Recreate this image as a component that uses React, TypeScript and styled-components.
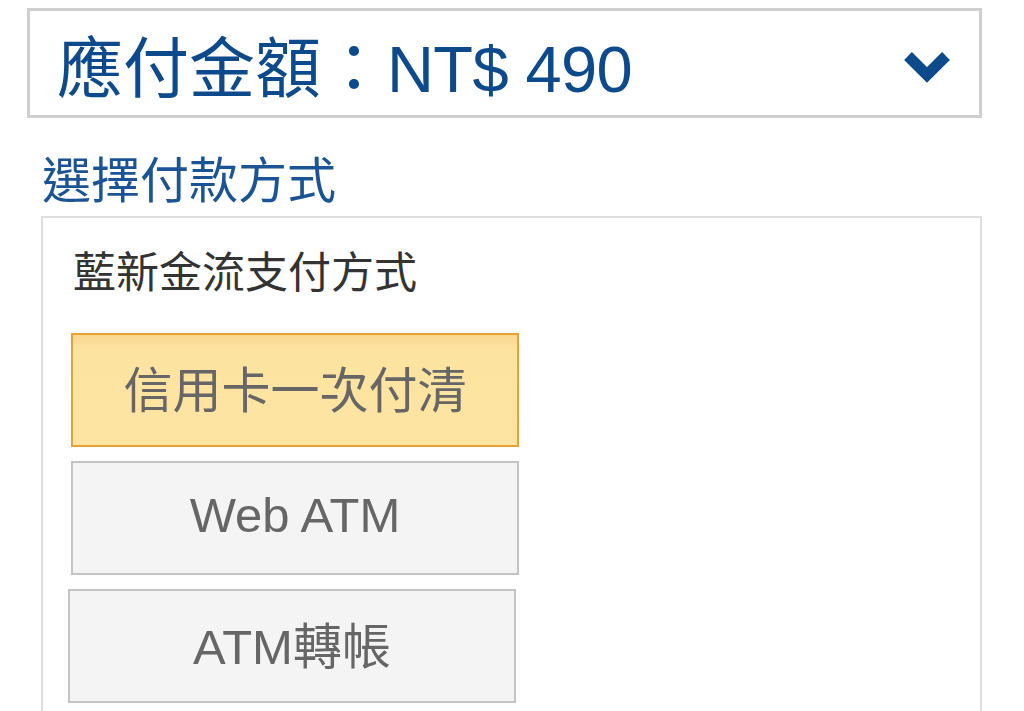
import React from "react";
import styled, { createGlobalStyle } from "styled-components";

const Global = createGlobalStyle`
  html, body { margin: 0; padding: 0; background: #fff; }
  body { font-family: "Liberation Sans", "Noto Sans CJK TC", sans-serif; }
`;

const Page = styled.div`
  padding: 8px 42px 0 27px;
  height: 711px;
  box-sizing: border-box;
  overflow: hidden;
`;

const AmountBar = styled.div`
  height: 110px;
  box-sizing: border-box;
  border: 3px solid #cfcfcf;
  display: flex;
  align-items: center;
  justify-content: space-between;
  padding: 12px 28px 0 27px;
`;

const Amount = styled.div`
  font-size: 66px;
  line-height: 1;
  color: #0d4a8c;
  white-space: nowrap;
`;

const Latin = styled.span`
  font-size: 65px;
  letter-spacing: -0.6px;
`;

const Chevron = styled.svg`
  width: 48px;
  height: 34px;
  display: block;
  margin-top: -4px;
`;

const SectionTitle = styled.h2`
  margin: 34px 0 6px 15px;
  font-size: 49px;
  line-height: 58px;
  font-weight: normal;
  color: #1b5494;
`;

const MethodPanel = styled.div`
  margin-left: 14px;
  border: 2px solid #dedede;
  border-bottom: none;
  padding: 26px 28px 40px 28px;
  min-height: 600px;
`;

const ProviderTitle = styled.div`
  font-size: 43px;
  line-height: 58px;
  color: #333;
  margin-left: 2px;
`;

const MethodList = styled.div`
  margin-top: 31px;
  display: flex;
  flex-direction: column;
  gap: 14px;
`;

const MethodButton = styled.div<{ $active?: boolean; $shift?: number }>`
  width: 448px;
  height: 114px;
  box-sizing: border-box;
  margin-left: ${(p) => p.$shift ?? 0}px;
  padding-bottom: 7px;
  display: flex;
  align-items: center;
  justify-content: center;
  font-size: 49px;
  color: #666;
  border: 2px solid ${(p) => (p.$active ? "#e6a233" : "#c4c4c4")};
  background: ${(p) =>
    p.$active
      ? "linear-gradient(#f8d68e 0px, #fde3a0 14px, #fee4a2 100%)"
      : "#f4f4f4"};
`;

export default function App() {
  return (
    <>
      <Global />
      <Page>
        <AmountBar>
          <Amount>
            應付金額：<Latin>NT$ 490</Latin>
          </Amount>
          <Chevron viewBox="0 0 48 34">
            <polyline
              points="5,6 24,25 43,6"
              fill="none"
              stroke="#0d4a8c"
              strokeWidth="11"
              strokeLinejoin="miter"
            />
          </Chevron>
        </AmountBar>
        <SectionTitle>選擇付款方式</SectionTitle>
        <MethodPanel>
          <ProviderTitle>藍新金流支付方式</ProviderTitle>
          <MethodList>
            <MethodButton $active>信用卡一次付清</MethodButton>
            <MethodButton>Web ATM</MethodButton>
            <MethodButton $shift={-3}>ATM轉帳</MethodButton>
          </MethodList>
        </MethodPanel>
      </Page>
    </>
  );
}
